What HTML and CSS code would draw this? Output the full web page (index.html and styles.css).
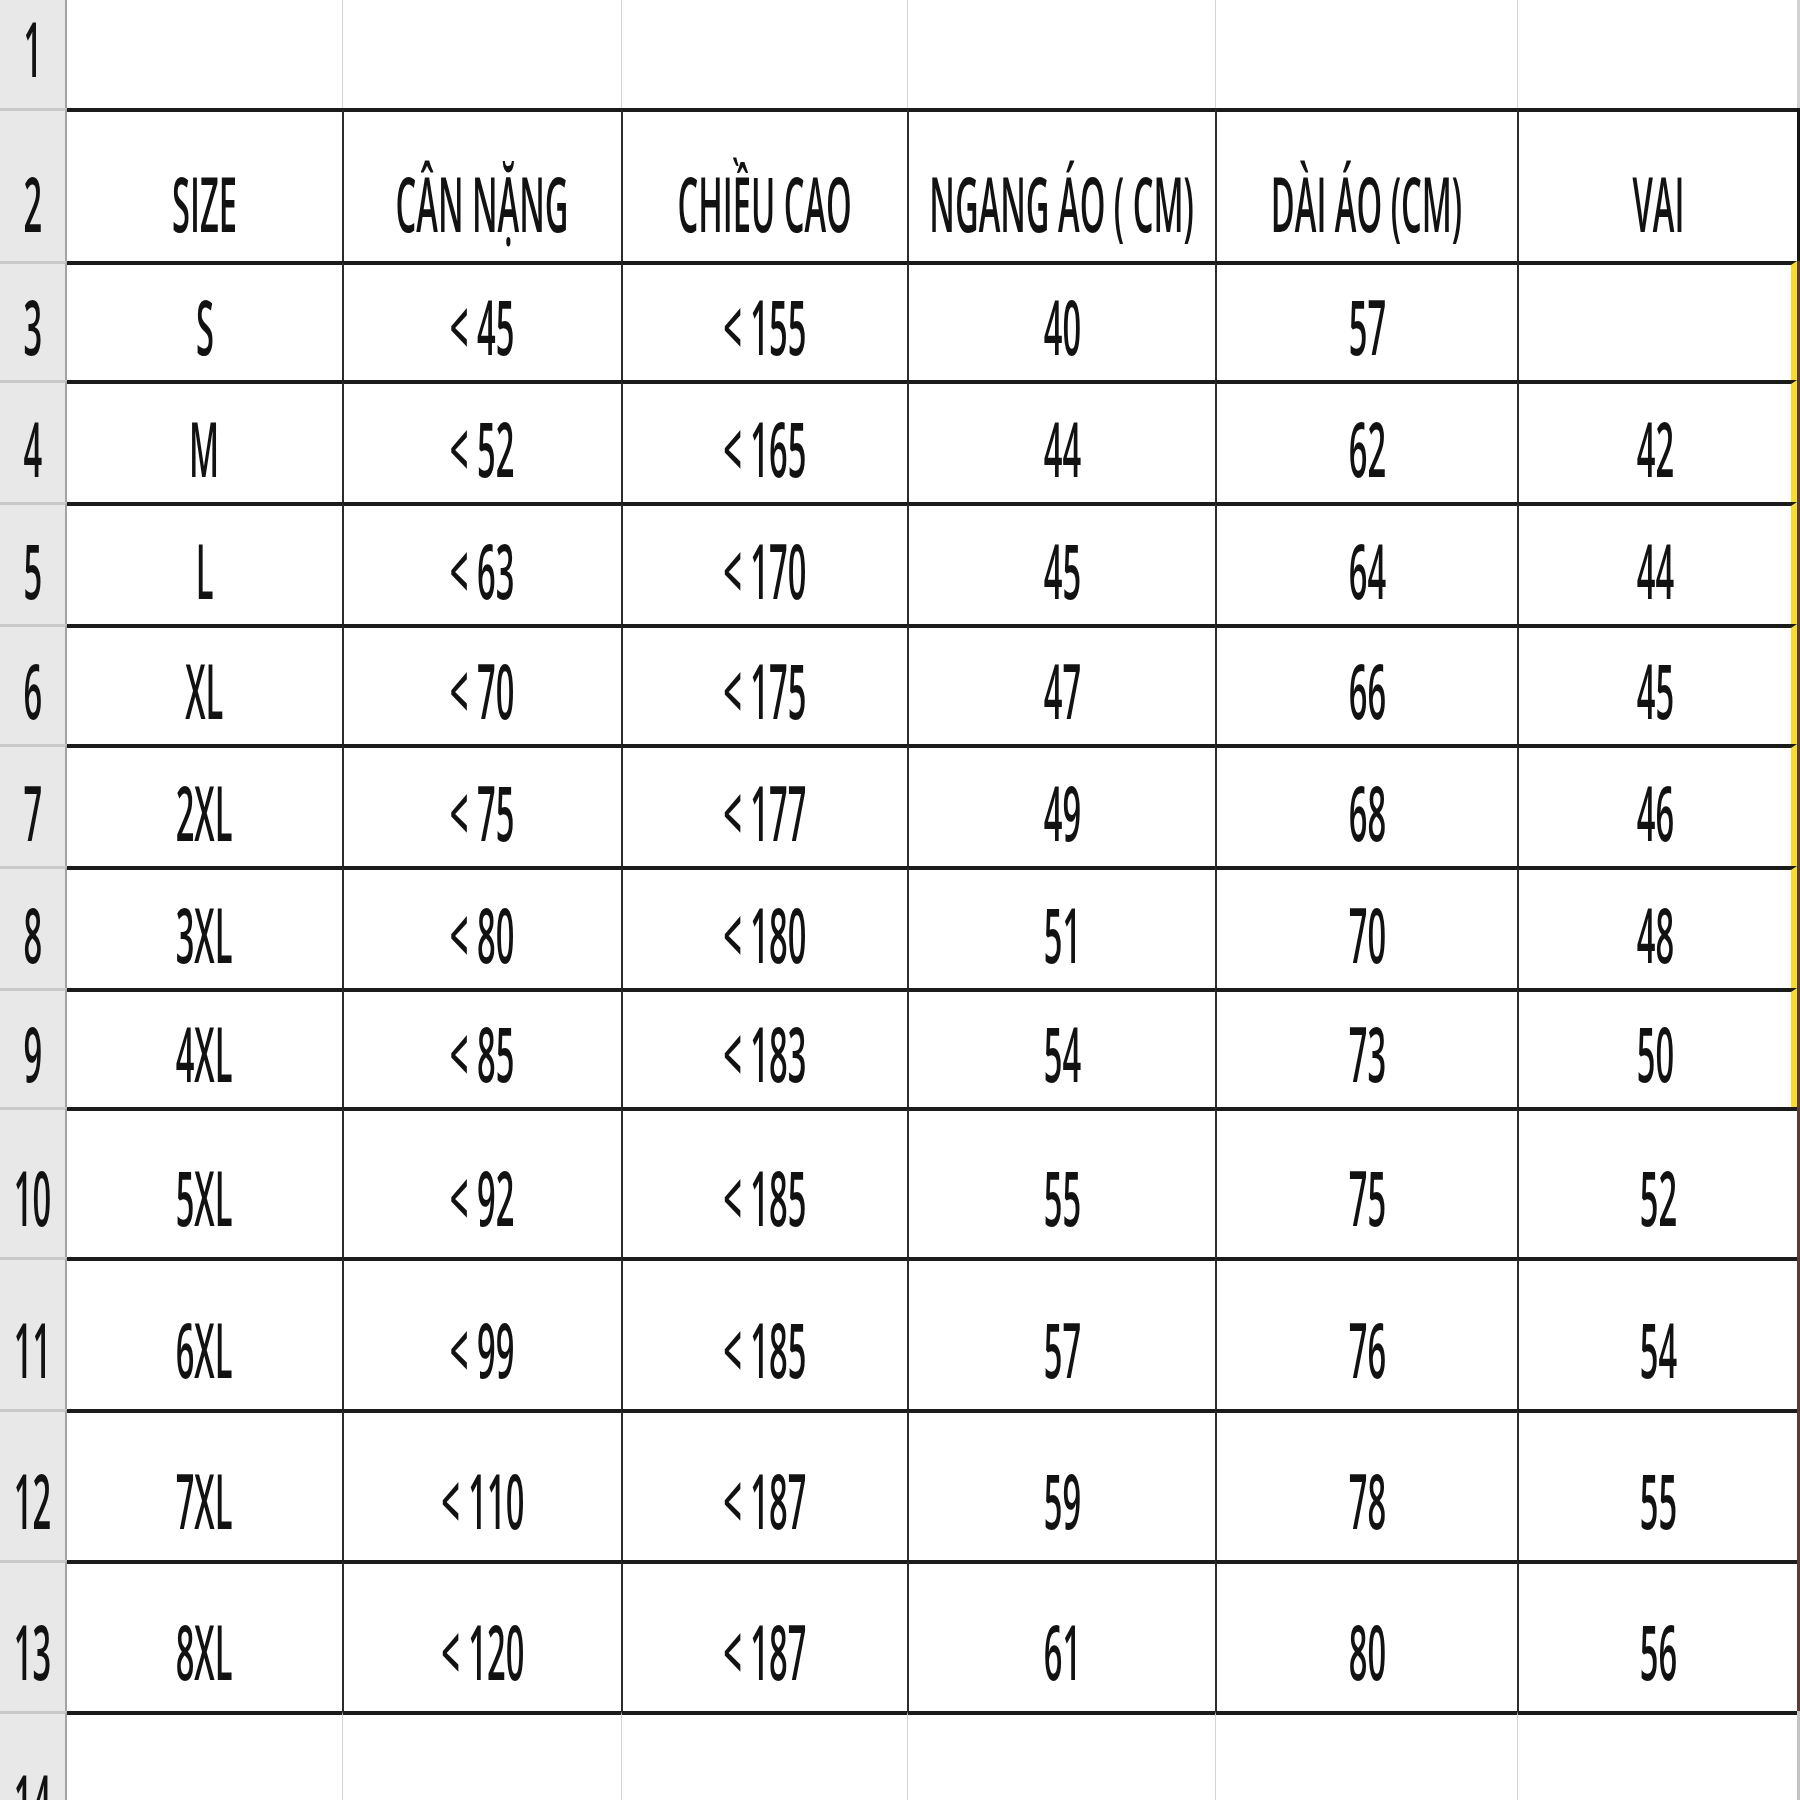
FILE: index.html
```html
<!DOCTYPE html>
<html lang="vi">
<head>
<meta charset="utf-8">
<title>Bảng size</title>
<link rel="stylesheet" href="styles.css">
</head>
<body>
<div class="sheet">
  <div class="row r1">
    <div class="rh"><span class="t">1</span></div>
    <div class="c c1"></div><div class="c"></div><div class="c"></div><div class="c"></div><div class="c"></div><div class="c c6"></div>
    <div class="e"></div>
  </div>
  <div class="row r2">
    <div class="rh"><span class="t">2</span></div>
    <div class="c c1"><span class="t">SIZE</span></div>
    <div class="c"><span class="t">CÂN NẶNG</span></div>
    <div class="c"><span class="t">CHIỀU CAO</span></div>
    <div class="c"><span class="t">NGANG ÁO ( CM)</span></div>
    <div class="c"><span class="t">DÀI ÁO (CM)</span></div>
    <div class="c c6"><span class="t">VAI</span></div>
    <div class="e"></div>
  </div>
  <div class="row ylw">
    <div class="rh"><span class="t">3</span></div>
    <div class="c c1"><span class="t">S</span></div>
    <div class="c"><span class="t">&lt; 45</span></div>
    <div class="c"><span class="t">&lt; 155</span></div>
    <div class="c"><span class="t">40</span></div>
    <div class="c"><span class="t">57</span></div>
    <div class="c c6"></div>
    <div class="e"></div>
  </div>
  <div class="row ylw">
    <div class="rh"><span class="t">4</span></div>
    <div class="c c1"><span class="t">M</span></div>
    <div class="c"><span class="t">&lt; 52</span></div>
    <div class="c"><span class="t">&lt; 165</span></div>
    <div class="c"><span class="t">44</span></div>
    <div class="c"><span class="t">62</span></div>
    <div class="c c6"><span class="t">42</span></div>
    <div class="e"></div>
  </div>
  <div class="row ylw">
    <div class="rh"><span class="t">5</span></div>
    <div class="c c1"><span class="t">L</span></div>
    <div class="c"><span class="t">&lt; 63</span></div>
    <div class="c"><span class="t">&lt; 170</span></div>
    <div class="c"><span class="t">45</span></div>
    <div class="c"><span class="t">64</span></div>
    <div class="c c6"><span class="t">44</span></div>
    <div class="e"></div>
  </div>
  <div class="row ylw">
    <div class="rh"><span class="t">6</span></div>
    <div class="c c1"><span class="t">XL</span></div>
    <div class="c"><span class="t">&lt; 70</span></div>
    <div class="c"><span class="t">&lt; 175</span></div>
    <div class="c"><span class="t">47</span></div>
    <div class="c"><span class="t">66</span></div>
    <div class="c c6"><span class="t">45</span></div>
    <div class="e"></div>
  </div>
  <div class="row ylw">
    <div class="rh"><span class="t">7</span></div>
    <div class="c c1"><span class="t">2XL</span></div>
    <div class="c"><span class="t">&lt; 75</span></div>
    <div class="c"><span class="t">&lt; 177</span></div>
    <div class="c"><span class="t">49</span></div>
    <div class="c"><span class="t">68</span></div>
    <div class="c c6"><span class="t">46</span></div>
    <div class="e"></div>
  </div>
  <div class="row ylw">
    <div class="rh"><span class="t">8</span></div>
    <div class="c c1"><span class="t">3XL</span></div>
    <div class="c"><span class="t">&lt; 80</span></div>
    <div class="c"><span class="t">&lt; 180</span></div>
    <div class="c"><span class="t">51</span></div>
    <div class="c"><span class="t">70</span></div>
    <div class="c c6"><span class="t">48</span></div>
    <div class="e"></div>
  </div>
  <div class="row ylw">
    <div class="rh"><span class="t">9</span></div>
    <div class="c c1"><span class="t">4XL</span></div>
    <div class="c"><span class="t">&lt; 85</span></div>
    <div class="c"><span class="t">&lt; 183</span></div>
    <div class="c"><span class="t">54</span></div>
    <div class="c"><span class="t">73</span></div>
    <div class="c c6"><span class="t">50</span></div>
    <div class="e"></div>
  </div>
  <div class="row">
    <div class="rh"><span class="t">10</span></div>
    <div class="c c1"><span class="t">5XL</span></div>
    <div class="c"><span class="t">&lt; 92</span></div>
    <div class="c"><span class="t">&lt; 185</span></div>
    <div class="c"><span class="t">55</span></div>
    <div class="c"><span class="t">75</span></div>
    <div class="c c6"><span class="t">52</span></div>
    <div class="e"></div>
  </div>
  <div class="row">
    <div class="rh"><span class="t">11</span></div>
    <div class="c c1"><span class="t">6XL</span></div>
    <div class="c"><span class="t">&lt; 99</span></div>
    <div class="c"><span class="t">&lt; 185</span></div>
    <div class="c"><span class="t">57</span></div>
    <div class="c"><span class="t">76</span></div>
    <div class="c c6"><span class="t">54</span></div>
    <div class="e"></div>
  </div>
  <div class="row">
    <div class="rh"><span class="t">12</span></div>
    <div class="c c1"><span class="t">7XL</span></div>
    <div class="c"><span class="t">&lt; 110</span></div>
    <div class="c"><span class="t">&lt; 187</span></div>
    <div class="c"><span class="t">59</span></div>
    <div class="c"><span class="t">78</span></div>
    <div class="c c6"><span class="t">55</span></div>
    <div class="e"></div>
  </div>
  <div class="row">
    <div class="rh"><span class="t">13</span></div>
    <div class="c c1"><span class="t">8XL</span></div>
    <div class="c"><span class="t">&lt; 120</span></div>
    <div class="c"><span class="t">&lt; 187</span></div>
    <div class="c"><span class="t">61</span></div>
    <div class="c"><span class="t">80</span></div>
    <div class="c c6"><span class="t">56</span></div>
    <div class="e"></div>
  </div>
  <div class="row r14">
    <div class="rh"><span class="t">14</span></div>
    <div class="c c1"></div><div class="c"></div><div class="c"></div><div class="c"></div><div class="c"></div><div class="c c6"></div>
    <div class="e"></div>
  </div>
</div>
</body>
</html>
```

FILE: styles.css
```css
html, body {
  margin: 0;
  padding: 0;
  width: 1800px;
  height: 1800px;
  overflow: hidden;
  background: #ffffff;
}

.sheet {
  width: 1800px;
  height: 1800px;
  overflow: hidden;
  display: grid;
  grid-template-columns: 67px 275px 279px 286px 308px 302px 280px 3px;
  grid-template-rows: 108px 153px 119px 122px 122px 120px 122px 122px 119px 150px 152px 151px 151px 150px;
}

.row {
  display: contents;
}

.rh,
.c {
  box-sizing: border-box;
  display: flex;
  justify-content: center;
  align-items: flex-end;
  padding-bottom: 22px;
  overflow: visible;
}

.r2 .rh,
.r2 .c {
  padding-bottom: 20px;
}

.ylw .rh,
.ylw .c {
  padding-bottom: 16px;
}

.rh {
  background: #e8e8e8;
  border-right: 2px solid #a3a3a3;
  border-top: 3px solid #c9c9c9;
}

.c {
  background: #ffffff;
  border-top: 4px solid #1b1b1b;
  border-left: 2px solid #2c2c2c;
}

.c.c1 {
  border-left: none;
}

.r1 .rh {
  border-top: none;
}

.r1 .c {
  border-top: none;
  border-left: 1px solid #d5d5d5;
}

.r14 .c {
  border-left: 1px solid #d5d5d5;
}

.r1 .c.c1,
.r14 .c.c1 {
  border-left: none;
}

.ylw .c6 {
  border-right: 6px solid #f6dc2c;
}

.e {
  background: #5b3b34;
}

.r1 .e {
  background: #d2d2d2;
}

.r2 .e {
  background: #161616;
}

.r14 .e {
  background: #c4c4c4;
}

.t {
  display: inline-block;
  font-family: "Open Sans", "Noto Sans", sans-serif;
  font-weight: 600;
  font-size: 76px;
  line-height: 1;
  color: #121212;
  white-space: nowrap;
  transform: scaleX(0.43);
  transform-origin: center bottom;
}
```
